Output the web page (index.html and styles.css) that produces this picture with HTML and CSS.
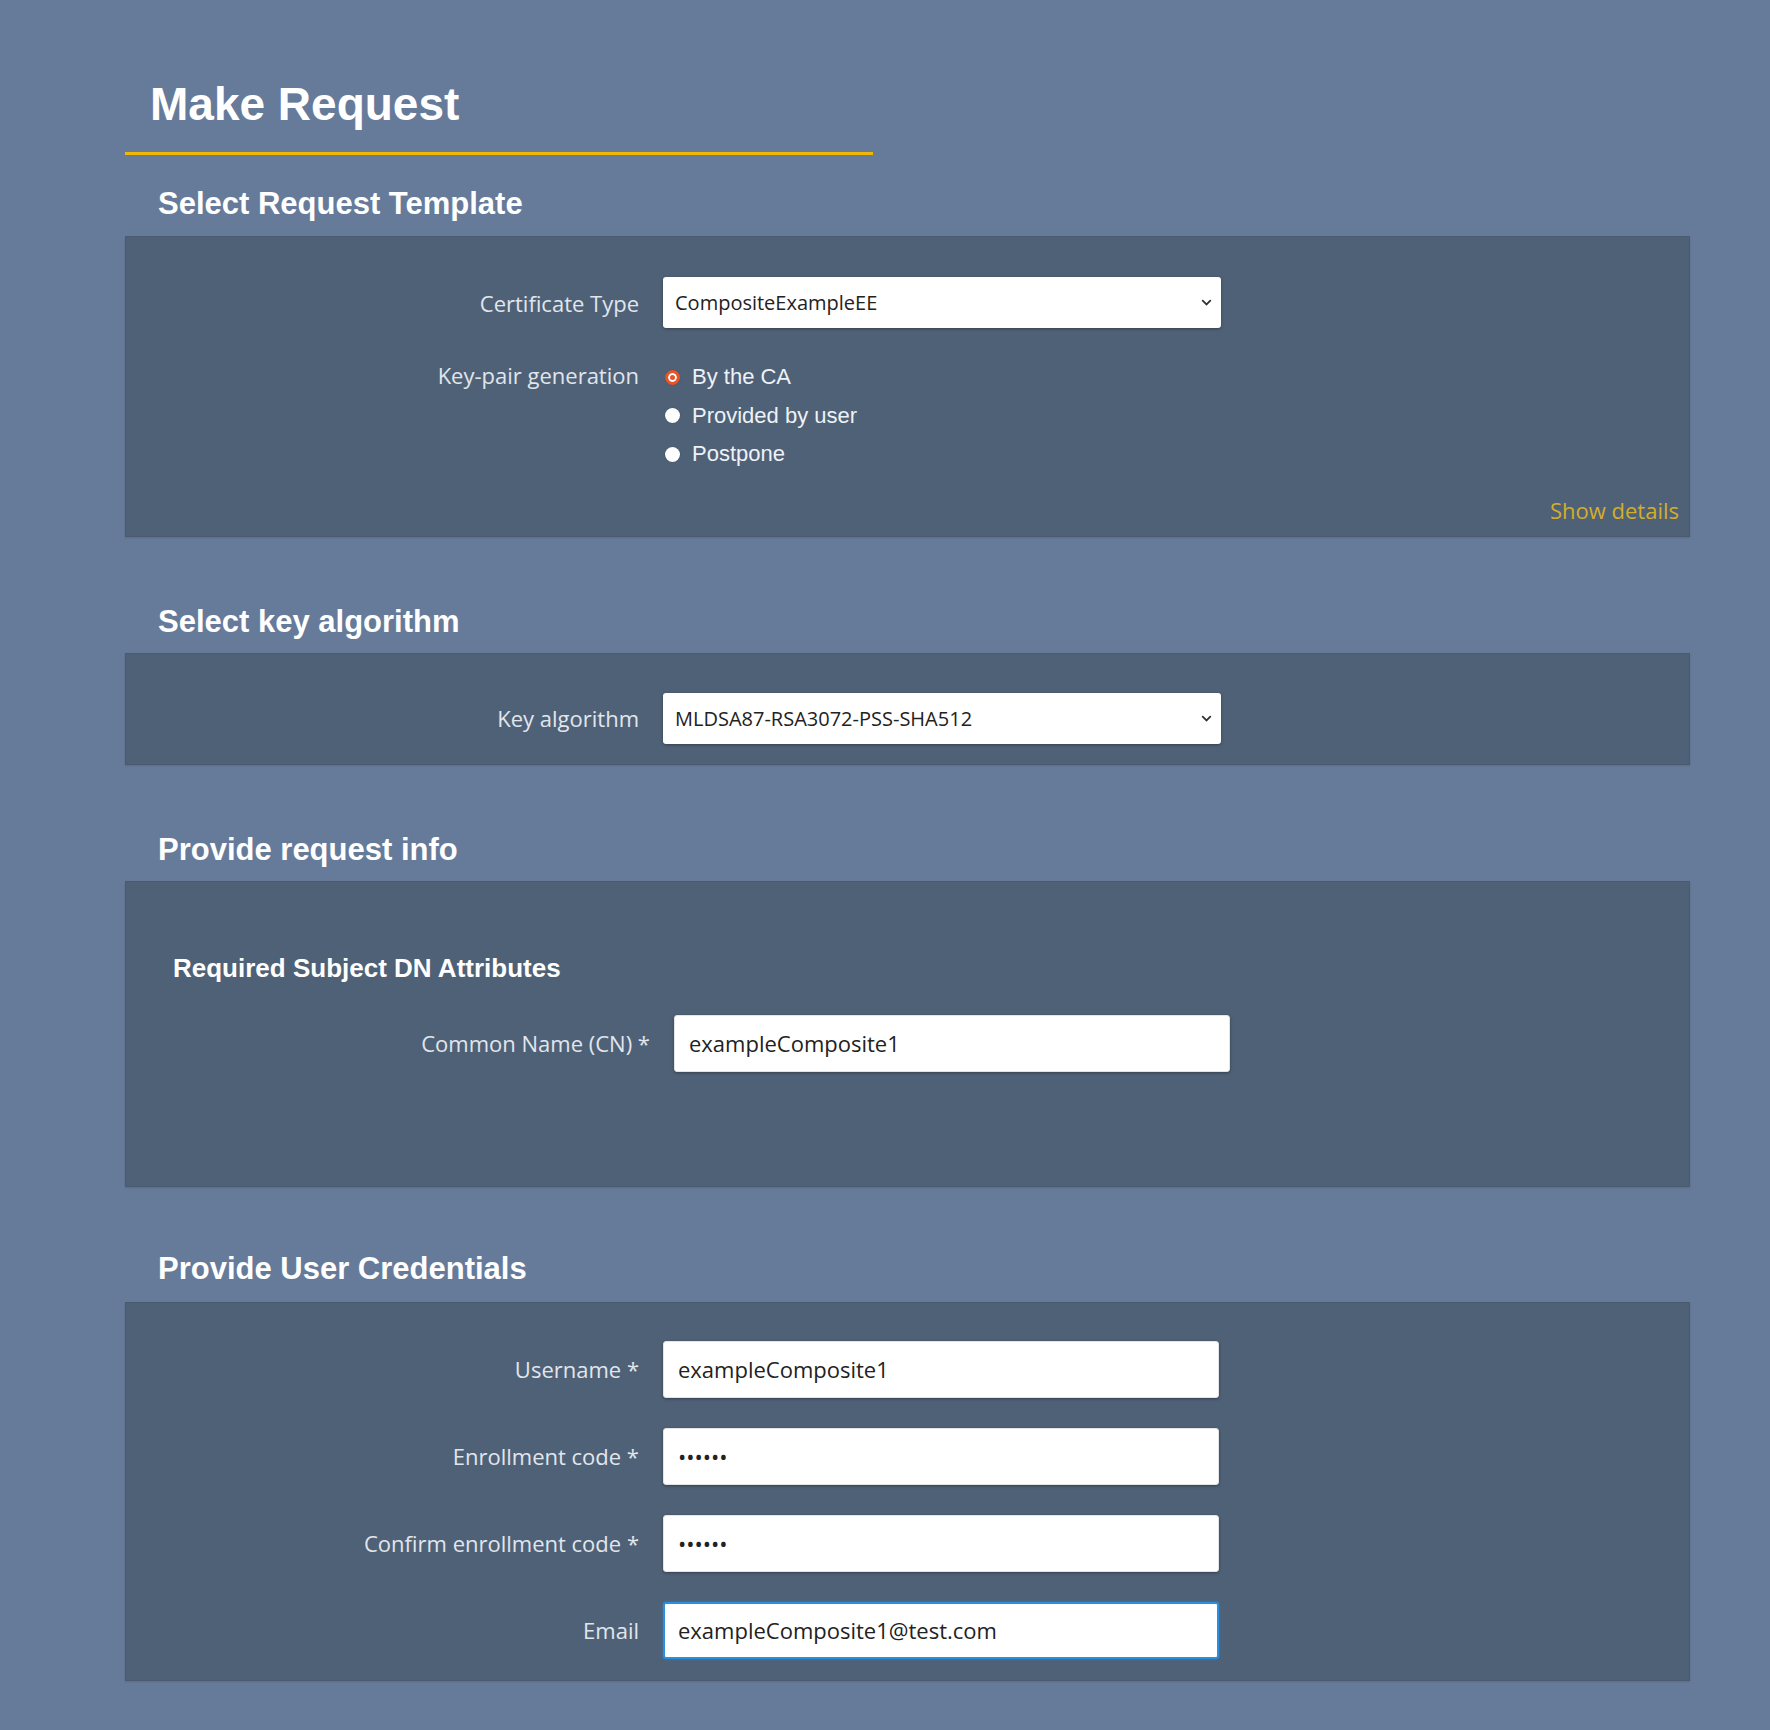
FILE: index.html
```html
<!DOCTYPE html>
<html lang="en">
<head>
<meta charset="utf-8">
<title>Make Request</title>
<link rel="stylesheet" href="styles.css">
</head>
<body>
<main class="page">
  <header class="page-head">
    <h1 class="page-title">Make Request</h1>
  </header>

  <h2 class="section-title first">Select Request Template</h2>
  <section class="panel panel-template">
    <div class="form-row">
      <label class="field-label">Certificate Type</label>
      <div class="select-wrap">
        <select class="select">
          <option>CompositeExampleEE</option>
        </select>
        <svg class="chevron" width="11" height="7" viewBox="0 0 11 7"><path d="M1.2 1.2 5.5 5.4 9.8 1.2" fill="none" stroke="#333" stroke-width="1.8"/></svg>
      </div>
    </div>
    <div class="form-row row-radios">
      <label class="field-label radio-caption">Key-pair generation</label>
      <div class="radios">
        <label class="radio-item"><span class="radio checked"></span>By the CA</label>
        <label class="radio-item"><span class="radio"></span>Provided by user</label>
        <label class="radio-item"><span class="radio"></span>Postpone</label>
      </div>
    </div>
    <div class="panel-foot"><a class="details-link">Show details</a></div>
  </section>

  <h2 class="section-title">Select key algorithm</h2>
  <section class="panel panel-algo">
    <div class="form-row">
      <label class="field-label">Key algorithm</label>
      <div class="select-wrap">
        <select class="select">
          <option>MLDSA87-RSA3072-PSS-SHA512</option>
        </select>
        <svg class="chevron" width="11" height="7" viewBox="0 0 11 7"><path d="M1.2 1.2 5.5 5.4 9.8 1.2" fill="none" stroke="#333" stroke-width="1.8"/></svg>
      </div>
    </div>
  </section>

  <h2 class="section-title">Provide request info</h2>
  <section class="panel panel-info">
    <div class="subsection">
      <h3 class="sub-title">Required Subject DN Attributes</h3>
      <div class="form-row">
        <label class="field-label">Common Name (CN) *</label>
        <input class="text-input" type="text" value="exampleComposite1">
      </div>
    </div>
  </section>

  <h2 class="section-title last">Provide User Credentials</h2>
  <section class="panel panel-cred">
    <div class="form-row">
      <label class="field-label">Username *</label>
      <input class="text-input" type="text" value="exampleComposite1">
    </div>
    <div class="form-row">
      <label class="field-label">Enrollment code *</label>
      <input class="text-input pass" type="password" value="123456">
    </div>
    <div class="form-row">
      <label class="field-label">Confirm enrollment code *</label>
      <input class="text-input pass" type="password" value="123456">
    </div>
    <div class="form-row">
      <label class="field-label">Email</label>
      <input class="text-input focused" type="text" value="exampleComposite1@test.com">
    </div>
  </section>
</main>
</body>
</html>
```

FILE: styles.css
```css
* { box-sizing: border-box; }

html, body {
  margin: 0;
  padding: 0;
  background: #667b9a;
}

body {
  font-family: "Open Sans", "Liberation Sans", sans-serif;
  min-height: 1730px;
}

.page {
  padding: 0 0 0 125px;
  width: 1690px;
}

.page-head {
  width: 748px;
  padding: 81px 0 25px 25px;
  border-bottom: 3px solid #f2b705;
}

.page-title {
  margin: 0;
  font-family: "Liberation Sans", Arial, sans-serif;
  font-weight: 700;
  font-size: 46px;
  line-height: 46px;
  color: #ffffff;
}

.section-title {
  margin: 69px 0 16px 33px;
  font-family: "Liberation Sans", Arial, sans-serif;
  font-weight: 700;
  font-size: 31px;
  line-height: 31px;
  color: #ffffff;
}

.section-title.first {
  margin-top: 33px;
  margin-bottom: 17px;
}

.section-title.last {
  margin-top: 66px;
  margin-bottom: 18px;
}

.panel {
  background: #4f6177;
  border: 1px solid #4a5b70;
  box-shadow: 0 1px 2px rgba(0, 0, 0, 0.12);
}

.panel-template { padding: 40px 10px 8px 0; }
.panel-algo { padding: 39px 0 20px 0; }
.panel-info { padding: 73px 0 114px 0; }
.panel-cred { padding: 38px 0 21px 0; }

.form-row {
  display: grid;
  grid-template-columns: 513px 557px;
  column-gap: 24px;
  align-items: center;
}

.panel-cred .form-row + .form-row { margin-top: 30px; }

.field-label {
  text-align: right;
  font-family: "Open Sans", sans-serif;
  font-size: 22px;
  color: #e1e6ec;
}

.row-radios {
  margin-top: 30px;
  align-items: start;
}

.radio-caption { line-height: 35px; }

.radios {
  display: flex;
  flex-direction: column;
}

.radio-item {
  display: flex;
  align-items: center;
  gap: 12px;
  height: 38.5px;
  font-family: "Liberation Sans", Arial, sans-serif;
  font-size: 22px;
  color: #eef1f5;
  padding-left: 2px;
}

.radio {
  width: 15px;
  height: 15px;
  border-radius: 50%;
  background: #ffffff;
  box-shadow: 0 0 1px rgba(0, 0, 0, 0.4);
  flex: none;
}

.radio.checked {
  background: #e8542a;
  border: 3px solid #e8542a;
  box-shadow: inset 0 0 0 2px #ffffff, 0 0 1px rgba(0, 0, 0, 0.3);
}

.panel-foot {
  margin-top: 21px;
  text-align: right;
  line-height: 30px;
}

.details-link {
  font-family: "Open Sans", sans-serif;
  font-size: 22px;
  color: #d3ae2b;
  cursor: pointer;
}

.select-wrap {
  position: relative;
  width: 558px;
}

.select {
  appearance: none;
  -webkit-appearance: none;
  width: 100%;
  height: 51px;
  margin: 0;
  padding: 0 30px 0 12px;
  border: none;
  border-radius: 3px;
  background: #ffffff;
  box-shadow: 0 1px 3px rgba(0, 0, 0, 0.35);
  font-family: "Open Sans", sans-serif;
  font-size: 20px;
  color: #222222;
}

.chevron {
  position: absolute;
  right: 9px;
  top: 22px;
}

.subsection {
  padding-left: 11px;
}

.sub-title {
  margin: 0 0 34px 36px;
  font-family: "Liberation Sans", Arial, sans-serif;
  font-weight: 700;
  font-size: 26px;
  line-height: 26px;
  color: #ffffff;
}

.text-input {
  width: 556px;
  height: 57px;
  margin: 0;
  padding: 0 14px;
  border: 1px solid #e4e4e4;
  border-radius: 3px;
  background: #ffffff;
  box-shadow: 0 1px 3px rgba(0, 0, 0, 0.35);
  font-family: "Open Sans", sans-serif;
  font-size: 22px;
  color: #222222;
  outline: none;
}

.text-input.pass {
  font-size: 22px;
  letter-spacing: 0;
}

.text-input.focused {
  border: 2px solid #2b8fe0;
  padding: 0 13px;
  box-shadow: 0 0 3px rgba(43, 143, 224, 0.6);
}
```
